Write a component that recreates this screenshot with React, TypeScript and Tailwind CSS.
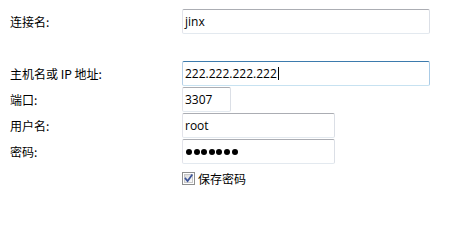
import React from "react";

const boxBase =
  "h-[25px] bg-white border border-solid border-t-[#abadb3] border-l-[#e2e3ea] border-r-[#dbdfe6] border-b-[#e3e9ef] rounded-[2px] flex items-center pl-[2px] font-['Open_Sans','Liberation_Sans',sans-serif] text-[12px] text-black";

function Row({ label, children, className = "" }: { label: string; children: React.ReactNode; className?: string }) {
  return (
    <div className={"flex items-center h-[25px] " + className}>
      <div className="w-[172px] shrink-0 leading-none">{label}</div>
      {children}
    </div>
  );
}

export default function App() {
  return (
    <div className="w-[460px] h-[242px] bg-white pl-[10px] pt-[9px] font-['Noto_Sans_CJK_SC','Noto_Sans',sans-serif] text-[12px] text-black overflow-hidden">
      <Row label="连接名:">
        <div className={boxBase + " w-[248px]"}>jinx</div>
      </Row>
      <Row label="主机名或 IP 地址:" className="mt-[27px]">
        <div className="h-[25px] w-[248px] bg-white border border-solid border-t-[#3d7bad] border-l-[#b5cfe7] border-r-[#a9cbe6] border-b-[#c7e2f1] rounded-[2px] flex items-center pl-[2px] font-['Open_Sans','Liberation_Sans',sans-serif] text-[12px] text-black">
          <span>222.222.222.222</span>
          <span className="inline-block w-[1px] h-[13px] bg-black ml-[1px]" />
        </div>
      </Row>
      <Row label="端口:" className="mt-[1px]">
        <div className={boxBase + " w-[49px]"}>3307</div>
      </Row>
      <Row label="用户名:" className="mt-[1px]">
        <div className={boxBase + " w-[153px]"}>root</div>
      </Row>
      <Row label="密码:" className="mt-[1px]">
        <div className={boxBase + " w-[153px] pl-[3px]"}>
          <div className="flex gap-[1.6px]">
            {Array.from({ length: 7 }).map((_, i) => (
              <span key={i} className="block w-[6px] h-[6px] rounded-full bg-black" />
            ))}
          </div>
        </div>
      </Row>
      <div className="flex items-center h-[13px] mt-[8px] pl-[172px]">
        <div className="w-[13px] h-[13px] border border-solid border-[#8e8f8f] bg-white p-[1px] shrink-0">
          <div className="w-full h-full bg-gradient-to-br from-[#dcdcdc] to-[#fbfbfb] border border-solid border-[#c8c8c8] relative">
            <svg viewBox="0 0 9 9" className="absolute left-[-1px] top-[-1px] w-[9px] h-[9px]">
              <path d="M1.5 4.5 L3.6 7 L7.8 1.2" fill="none" stroke="#3c5499" strokeWidth="1.7" strokeLinecap="square" />
            </svg>
          </div>
        </div>
        <span className="ml-[3px] leading-none">保存密码</span>
      </div>
    </div>
  );
}
